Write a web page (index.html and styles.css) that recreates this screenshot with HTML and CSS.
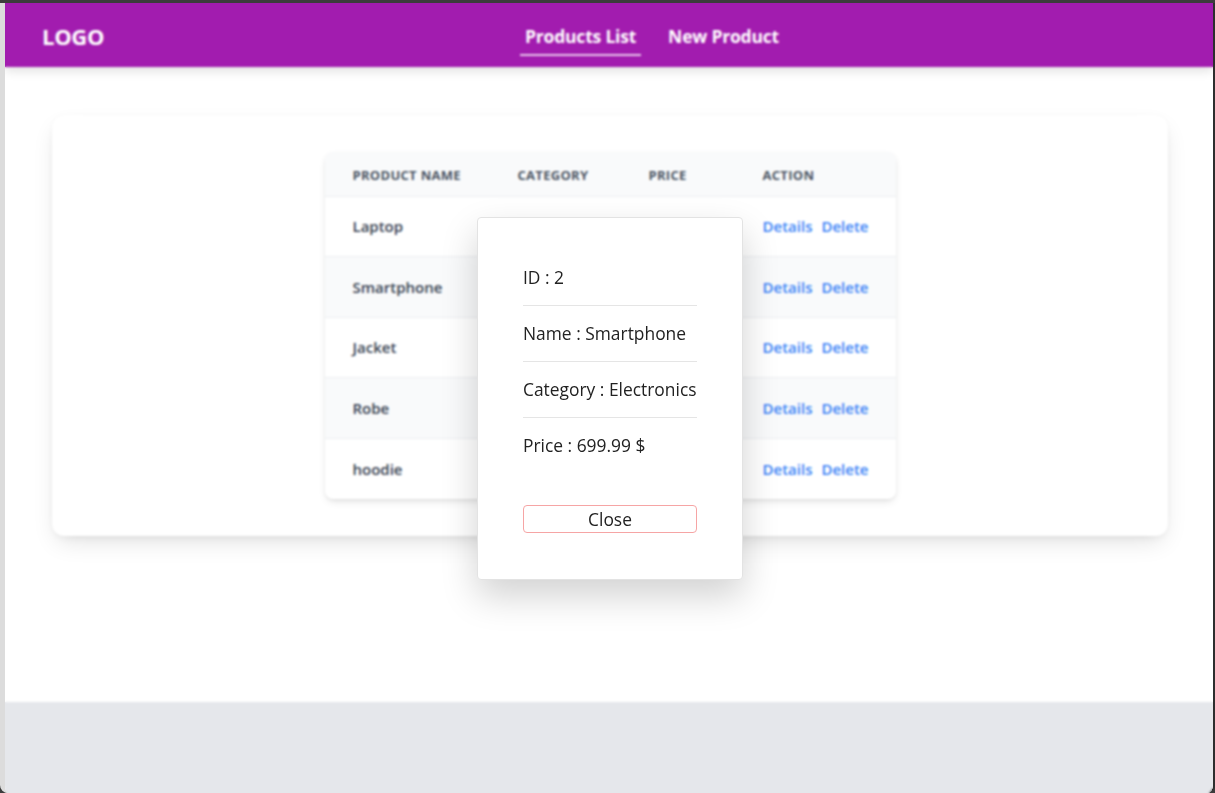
FILE: index.html
```html
<!DOCTYPE html>
<html lang="en">
<head>
<meta charset="utf-8">
<title>Products</title>
<link rel="stylesheet" href="styles.css">
</head>
<body>
<div class="frame">
  <div class="page">
    <header class="topbar">
      <div class="logo">LOGO</div>
      <nav class="nav">
        <a class="nav-link active" href="#">Products List</a>
        <a class="nav-link" href="#">New Product</a>
      </nav>
    </header>
    <main class="main">
      <section class="card">
        <table class="products">
          <thead>
            <tr><th>Product Name</th><th>Category</th><th>Price</th><th>Action</th></tr>
          </thead>
          <tbody>
            <tr><td>Laptop</td><td></td><td></td><td><a class="act" href="#">Details</a><a class="act" href="#">Delete</a></td></tr>
            <tr><td>Smartphone</td><td></td><td></td><td><a class="act" href="#">Details</a><a class="act" href="#">Delete</a></td></tr>
            <tr><td>Jacket</td><td></td><td></td><td><a class="act" href="#">Details</a><a class="act" href="#">Delete</a></td></tr>
            <tr><td>Robe</td><td></td><td></td><td><a class="act" href="#">Details</a><a class="act" href="#">Delete</a></td></tr>
            <tr><td>hoodie</td><td></td><td></td><td><a class="act" href="#">Details</a><a class="act" href="#">Delete</a></td></tr>
          </tbody>
        </table>
      </section>
    </main>
    <footer class="footer"></footer>
    <div class="overlay">
      <div class="modal">
        <ul class="info">
          <li>ID : 2</li>
          <li>Name : Smartphone</li>
          <li>Category : Electronics</li>
          <li>Price : 699.99 $</li>
        </ul>
        <button class="close-btn" type="button">Close</button>
      </div>
    </div>
  </div>
</div>
</body>
</html>
```

FILE: styles.css
```css
* { box-sizing: border-box; }
html, body { margin: 0; padding: 0; height: 100%; }
body {
  background: #3c3c3c;
  font-family: "Open Sans", "Noto Sans", "Liberation Sans", sans-serif;
}
.frame {
  height: 100vh;
  padding-top: 3px;
  background: #3c3c3c;
}
.page {
  position: relative;
  height: 100%;
  display: flex;
  flex-direction: column;
  background: #fff;
  border-left: 5px solid #dcdcdc;
  border-right: 2px solid #2e2e2e;
  border-bottom-left-radius: 8px;
  border-bottom-right-radius: 8px;
  overflow: hidden;
}
.topbar {
  height: 64px;
  flex: none;
  background: #a21caf;
  display: flex;
  align-items: center;
  padding: 0 37px;
  box-shadow: 0 4px 10px rgba(0,0,0,0.12);
  position: relative;
  z-index: 1;
}
.logo {
  color: #fff;
  font-weight: 700;
  font-size: 22px;
  width: 62px;
  letter-spacing: -0.3px;
  margin-top: 2px;
}
.nav {
  display: flex;
  gap: 22px;
  margin-left: 416px;
}
.nav-link {
  color: #fff;
  text-decoration: none;
  font-weight: 700;
  font-size: 17.5px;
  padding: 0 5px 6px;
  border-bottom: 2px solid transparent;
  margin-top: 10px;
  letter-spacing: -0.2px;
}
.nav-link.active { border-bottom-color: rgba(255,255,255,0.75); }
.main {
  flex: 1;
  padding: 48px 45px 0 47px;
}
.card {
  background: #fff;
  border-radius: 12px;
  padding: 37px 0;
  display: flex;
  justify-content: center;
  box-shadow: 0 10px 25px -5px rgba(0,0,0,0.12), 0 4px 10px -4px rgba(0,0,0,0.08), 0 0 2px rgba(0,0,0,0.05);
}
.products {
  width: 571px;
  table-layout: fixed;
  border-collapse: collapse;
  border-radius: 8px;
  overflow: hidden;
  box-shadow: 0 4px 8px -2px rgba(0,0,0,0.12), 0 1px 3px rgba(0,0,0,0.06);
}
.products th {
  background: #f9fafb;
  height: 44px;
  text-align: left;
  padding: 2px 28px 0;
  font-size: 13px;
  font-weight: 700;
  color: #4b5563;
  text-transform: uppercase;
  letter-spacing: 0.3px;
  white-space: nowrap;
}
.products th:nth-child(1) { width: 165px; }
.products th:nth-child(2) { width: 131px; }
.products th:nth-child(3) { width: 114px; }
.products th:nth-child(4) { width: 161px; }
.products td {
  height: 60.6px;
  padding: 0 28px;
  font-size: 15px;
  font-weight: 600;
  color: #374151;
  border-top: 1px solid #eceef1;
  white-space: nowrap;
}
.products tbody tr:nth-child(even) td { background: #f9fafb; }
.act {
  color: #3b82f6;
  text-decoration: none;
  font-weight: 600;
  font-size: 15px;
  margin-right: 9px;
}
.footer {
  height: 91px;
  flex: none;
  background: #e5e7eb;
}
.overlay {
  position: absolute;
  inset: 0;
  z-index: 5;
  display: flex;
  align-items: center;
  justify-content: center;
  backdrop-filter: blur(1.2px);
  -webkit-backdrop-filter: blur(1.2px);
}
.modal {
  width: 266px;
  height: 363px;
  margin-left: 2px;
  margin-top: 1px;
  background: #fff;
  border: 1px solid #e3e3e3;
  border-radius: 4px;
  padding: 32px 45px 0;
  box-shadow: 0 16px 36px rgba(0,0,0,0.18);
  color: #222;
  font-family: "Open Sans", "Noto Sans", sans-serif;
}
.info {
  list-style: none;
  margin: 0;
  padding: 0;
}
.info li {
  padding: 16px 0;
  line-height: 23px;
  font-size: 17.4px;
  border-bottom: 1px solid #e5e5e5;
  white-space: nowrap;
}
.info li:last-child { border-bottom: none; }
.close-btn {
  display: block;
  width: 174px;
  height: 28px;
  margin-top: 32px;
  background: #fff;
  border: 1px solid #f6a5a5;
  border-radius: 4px;
  font-family: inherit;
  font-size: 17.4px;
  line-height: 1;
  color: #222;
  padding: 2px 0 0;
  cursor: pointer;
}
```
